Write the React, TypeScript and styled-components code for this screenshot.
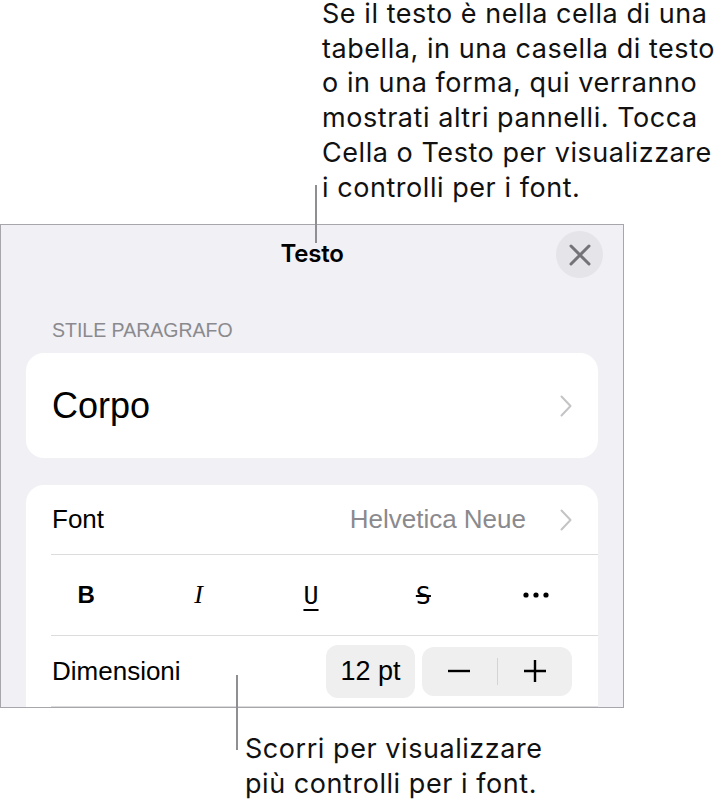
import React from "react";
import styled, { createGlobalStyle } from "styled-components";

const GlobalStyle = createGlobalStyle`
  html, body { margin: 0; padding: 0; background: #fff; }
  body { font-family: "Liberation Sans", Arial, sans-serif; color: #000; }
`;

const topNote = [
  "Se il testo è nella cella di una",
  "tabella, in una casella di testo",
  "o in una forma, qui verranno",
  "mostrati altri pannelli. Tocca",
  "Cella o Testo per visualizzare",
  "i controlli per i font.",
];
const bottomNote = ["Scorri per visualizzare", "più controlli per i font."];

const tools = [
  { key: "b", label: "B", kind: "bold" },
  { key: "i", label: "I", kind: "italic" },
  { key: "u", label: "U", kind: "under" },
  { key: "s", label: "S", kind: "strike" },
] as const;

function Chevron() {
  return (
    <ChevronSvg width="12" height="22" viewBox="0 0 12 22">
      <path d="M1.5 1.5 L10.5 11 L1.5 20.5" fill="none" stroke="currentColor" strokeWidth="2" strokeLinecap="round" strokeLinejoin="round" />
    </ChevronSvg>
  );
}

export default function App() {
  return (
    <Page>
      <GlobalStyle />

      {/* nota in alto */}
      <Note $left={322} $top={-3}>
        {topNote.map((l) => (
          <NoteLine key={l}>{l}</NoteLine>
        ))}
      </Note>
      <Leader $left={315} $top={185} $height={58} />

      <Panel>
        <Header>
          <span />
          <Title>Testo</Title>
          <CloseBtn aria-label="Chiudi">
            <svg width="22" height="22" viewBox="0 0 22 22">
              <path d="M2 2 L20 20 M20 2 L2 20" stroke="currentColor" strokeWidth="3" strokeLinecap="round" />
            </svg>
          </CloseBtn>
        </Header>

        <SectionLabel>STILE PARAGRAFO</SectionLabel>
        <StyleCard>
          <StyleName>Corpo</StyleName>
          <Chevron />
        </StyleCard>

        <FontCard>
          <Row $h={69}>
            <RowLabel>Font</RowLabel>
            <RowRight>
              <RowValue>Helvetica Neue</RowValue>
              <Chevron />
            </RowRight>
          </Row>
          <Divider />
          <ToolRow>
            {tools.map((t) => (
              <Tool key={t.key}>
                <ToolGlyph $kind={t.kind}>{t.label}</ToolGlyph>
              </Tool>
            ))}
            <Tool>
              <svg width="26" height="6" viewBox="0 0 26 6">
                <circle cx="3" cy="3" r="2.6" fill="#000" />
                <circle cx="13" cy="3" r="2.6" fill="#000" />
                <circle cx="23" cy="3" r="2.6" fill="#000" />
              </svg>
            </Tool>
          </ToolRow>
          <Divider />
          <Row $h={70}>
            <RowLabel>Dimensioni</RowLabel>
            <SizeControls>
              <SizePill>12 pt</SizePill>
              <Stepper>
                <StepBtn aria-label="Riduci">
                  <svg width="24" height="24" viewBox="0 0 24 24">
                    <path d="M1 12 H23" stroke="#000" strokeWidth="2.4" />
                  </svg>
                </StepBtn>
                <StepSep />
                <StepBtn aria-label="Aumenta">
                  <svg width="24" height="24" viewBox="0 0 24 24">
                    <path d="M1 12 H23 M12 1 V23" stroke="#000" strokeWidth="2.4" />
                  </svg>
                </StepBtn>
              </Stepper>
            </SizeControls>
          </Row>
          <Divider />
          <Row $h={70} />
        </FontCard>
      </Panel>

      {/* nota in basso */}
      <Leader $left={236} $top={675} $height={75} />
      <Note $left={245} $top={24}>
        {bottomNote.map((l) => (
          <NoteLine key={l}>{l}</NoteLine>
        ))}
      </Note>
    </Page>
  );
}

/* ===== styled ===== */
const Page = styled.div`
  position: relative; width: 724px; height: 809px; overflow: hidden; background: #fff;
`;

const Note = styled.div<{ $left: number; $top: number }>`
  margin: ${(p) => p.$top}px 0 0 ${(p) => p.$left}px;
  font-family: Inter, "Noto Sans", sans-serif; font-size: 27px; line-height: 34.7px;
  color: #111; letter-spacing: 0.55px;
`;
const NoteLine = styled.div`white-space: nowrap;`;

const Leader = styled.span<{ $left: number; $top: number; $height: number }>`
  position: absolute; z-index: 2;
  left: ${(p) => p.$left}px; top: ${(p) => p.$top}px;
  width: 2px; height: ${(p) => p.$height}px; background: #8e8e93;
`;

const Panel = styled.div`
  margin-top: 18.8px; width: 624px; height: 484px; box-sizing: border-box;
  border: 1px solid #a7a7ab;
  background: #f1f0f5; overflow: hidden;
`;

const Header = styled.div`
  display: grid; grid-template-columns: 47px 1fr 47px; align-items: center;
  padding: 6px 20px 0 20px; height: 47px;
`;
const Title = styled.div`
  text-align: center; font-family: Inter, "Liberation Sans", sans-serif;
  font-size: 24px; font-weight: 600; line-height: 28px; margin-top: -1px; letter-spacing: -0.2px;
`;
const CloseBtn = styled.button`
  width: 47px; height: 47px; border: none; border-radius: 50%; padding: 0;
  background: #e4e4e9; color: #737378; display: flex; align-items: center; justify-content: center;
`;

const SectionLabel = styled.div`
  margin-top: 41px; padding-left: 51px;
  font-size: 19.5px; line-height: 23px; color: #8a8a8e;
`;

const StyleCard = styled.div`
  margin: 11px 25px 0; height: 105px; border-radius: 18px; background: #fff;
  display: flex; align-items: center; justify-content: space-between; padding: 0 26px;
`;
const StyleName = styled.div`font-size: 36px; margin-top: 1px;`;

const ChevronSvg = styled.svg`color: #c4c4c7; flex: none;`;

const FontCard = styled.div`
  margin: 27px 25px 0; border-radius: 18px; background: #fff;
`;
const Row = styled.div<{ $h: number }>`
  height: ${(p) => p.$h}px; display: flex; align-items: center; justify-content: space-between;
  padding: 0 26px;
`;
const RowLabel = styled.div`font-size: 26px;`;
const RowRight = styled.div`display: flex; align-items: center; gap: 34px;`;
const RowValue = styled.div`font-size: 26px; color: #8a8a8e;`;
const Divider = styled.div`margin-left: 25px; height: 1px; background: #dcdcde;`;

const ToolRow = styled.div`
  height: 80px; display: grid; grid-template-columns: repeat(5, 1fr); padding: 0 6px 0 4px;
`;
const Tool = styled.div`display: flex; align-items: center; justify-content: center;`;
const ToolGlyph = styled.span<{ $kind: "bold" | "italic" | "under" | "strike" }>`
  line-height: 1; color: #000;
  ${(p) =>
    p.$kind === "bold"
      ? `font: 700 24px "Liberation Sans", Arial, sans-serif;`
      : p.$kind === "italic"
      ? `font: italic 400 26px "Liberation Serif", serif;`
      : `font: 400 25px "DejaVu Sans Mono", monospace; text-decoration-thickness: 2px;`}
  ${(p) => (p.$kind === "under" ? "text-decoration: underline; text-underline-offset: 5px;" : "")}
  ${(p) => (p.$kind === "strike" ? "text-decoration: line-through;" : "")}
`;

const SizeControls = styled.div`display: flex; align-items: center; gap: 7px;`;
const SizePill = styled.div`
  width: 89px; height: 53px; border-radius: 12px; background: #efeff0;
  display: flex; align-items: center; justify-content: center; font-size: 27px;
`;
const Stepper = styled.div`
  width: 150px; height: 49px; border-radius: 12px; background: #efeff0;
  display: flex; align-items: center;
`;
const StepBtn = styled.button`
  flex: 1; height: 100%; border: none; background: transparent; padding: 0;
  display: flex; align-items: center; justify-content: center;
`;
const StepSep = styled.div`width: 1px; height: 27px; background: #d4d4d6;`;
